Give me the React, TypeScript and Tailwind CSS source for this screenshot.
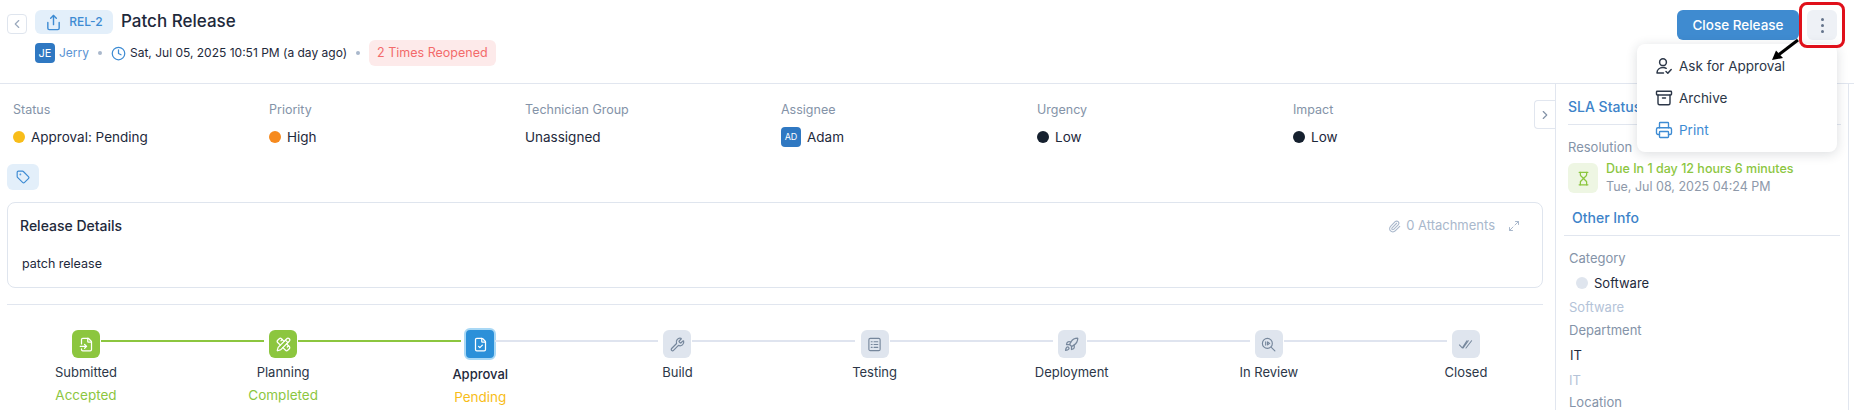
import {
  Archive,
  ChevronLeft,
  ChevronRight,
  Clock,
  FileCheck,
  FileInput,
  Hourglass,
  Maximize2,
  Paperclip,
  PencilRuler,
  Printer,
  Rocket,
  Share,
  Tag,
  Wrench,
} from "lucide-react";

const fields = [
  { label: "Status", value: "Approval: Pending", dot: "bg-[#f8bd19]" },
  { label: "Priority", value: "High", dot: "bg-[#f68a1e]" },
  { label: "Technician Group", value: "Unassigned" },
  { label: "Assignee", value: "Adam", avatar: "AD" },
  { label: "Urgency", value: "Low", dot: "bg-[#15202e]" },
  { label: "Impact", value: "Low", dot: "bg-[#15202e]" },
];

function TestingIcon({ size = 15 }: { size?: number }) {
  return (
    <svg width={size} height={size} viewBox="0 0 16 16" fill="none" stroke="currentColor" strokeWidth="1.2" strokeLinecap="round">
      <rect x="2" y="1.5" width="12" height="13" rx="1.5" />
      <path d="M4.5 5h1M7.5 5h4M4.5 8h1M7.5 8h4M4.5 11h1M7.5 11h4" />
    </svg>
  );
}

function ReviewIcon({ size = 15 }: { size?: number }) {
  return (
    <svg width={size} height={size} viewBox="0 0 16 16" fill="none" stroke="currentColor" strokeWidth="1.2" strokeLinecap="round" strokeLinejoin="round">
      <circle cx="6.8" cy="6.8" r="5.3" />
      <path d="M11 11l3.8 3.8M5 5v3.6M7 5.2v3.2l2.2-1.6z" />
    </svg>
  );
}

function ClosedIcon({ size = 15 }: { size?: number }) {
  return (
    <svg width={size} height={size} viewBox="0 0 16 16" fill="none" stroke="currentColor" strokeWidth="1.1" strokeLinecap="round" strokeLinejoin="round">
      <path d="M1.5 8.5l3 3.2L9.5 4M5.5 11.7L11 4M8.5 11.7L14.5 4" />
    </svg>
  );
}

function ApprovalIcon() {
  return (
    <svg width="18" height="18" viewBox="0 0 18 18" fill="none" stroke="currentColor" strokeWidth="1.5" strokeLinecap="round" strokeLinejoin="round">
      <circle cx="8" cy="5.2" r="3.4" />
      <path d="M2 16c0-3.4 2.6-5.4 6-5.4 1.2 0 2.3.2 3.2.7M2 16h6.5M11 14.5l1.8 1.7 3.4-3.6" />
    </svg>
  );
}

const steps = [
  { name: "Submitted", sub: "Accepted", Icon: FileInput, state: "done" },
  { name: "Planning", sub: "Completed", Icon: PencilRuler, state: "done" },
  { name: "Approval", sub: "Pending", Icon: FileCheck, state: "active" },
  { name: "Build", Icon: Wrench, state: "todo" },
  { name: "Testing", Icon: TestingIcon, state: "todo" },
  { name: "Deployment", Icon: Rocket, state: "todo" },
  { name: "In Review", Icon: ReviewIcon, state: "todo" },
  { name: "Closed", Icon: ClosedIcon, state: "todo" },
];

function Stepper() {
  return (
    <div className="flex justify-between pl-[19px] pr-[17px] pt-[25px]">
      {steps.map((s, i) => (
        <div key={s.name} className="relative flex w-[120px] flex-col items-center">
          {i < steps.length - 1 && (
            <span
              className={`absolute left-[75px] top-[10px] h-[2px] w-[163px] ${
                i < 2 ? "bg-[#8cc63f]" : "bg-[#dfe4ef]"
              }`}
            />
          )}
          {s.state === "done" && (
            <div className="flex h-[28px] w-[28px] items-center justify-center rounded-md bg-[#8cc63f] text-white">
              <s.Icon size={15} />
            </div>
          )}
          {s.state === "active" && (
            <div className="-mt-[2px] flex h-[32px] w-[32px] items-center justify-center rounded-md border-2 border-[#a9d8f5] bg-[#2b90d9] text-white">
              <s.Icon size={15} />
            </div>
          )}
          {s.state === "todo" && (
            <div className="flex h-[28px] w-[28px] items-center justify-center rounded-md bg-[#dfe5ee] text-[#76879c]">
              <s.Icon size={15} />
            </div>
          )}
          <div
            className={`mt-[5px] text-[13px] leading-[18px] ${
              s.state === "active" ? "font-medium text-[#1e293b]" : "text-[#2c3748]"
            }`}
          >
            {s.name}
          </div>
          {s.sub && (
            <div
              className={`mt-[5px] text-[13.5px] leading-[18px] ${
                s.state === "active" ? "text-[#f8bd19]" : "text-[#8cc63f]"
              }`}
            >
              {s.sub}
            </div>
          )}
        </div>
      ))}
    </div>
  );
}

function Sidebar() {
  return (
    <aside className="w-[294px] shrink-0 border-x border-[#e1e6ef] text-[13px]">
      <div className="ml-[12px] mr-[7px] border-b border-[#e1e6ef] pb-[8px] pt-[14px] text-[14px] font-medium leading-[18px] text-[#3d83c9]">
        SLA Status
      </div>
      <div className="ml-[12px] mt-[13px] leading-[18px] text-[#8493a8]">Resolution</div>
      <div className="ml-[12px] mt-[7px] flex gap-[8px]">
        <div className="flex h-[30px] w-[30px] items-center justify-center rounded-md bg-[#eef6e3] text-[#8cc63f]">
          <Hourglass size={15} />
        </div>
        <div className="-mt-[3px]">
          <div className="text-[12.5px] font-medium leading-[18px] text-[#8cc63f]">
            Due In 1 day 12 hours 6 minutes
          </div>
          <div className="text-[12.5px] leading-[18px] text-[#8e99aa]">Tue, Jul 08, 2025 04:24 PM</div>
        </div>
      </div>
      <div className="mx-[8px] mt-[13px] border-b border-[#e1e6ef] pb-[8px] pl-[8px] text-[14px] font-medium leading-[18px] text-[#3d83c9]">
        Other Info
      </div>
      <div className="ml-[13px] mt-[13px] leading-[18px] text-[#8493a8]">Category</div>
      <div className="ml-[20px] mt-[7px] flex items-center gap-[6px] leading-[18px] text-[#1e293b]">
        <span className="h-[12px] w-[12px] rounded-full bg-[#dfe5ee]" />
        Software
      </div>
      <div className="ml-[13px] mt-[6px] leading-[18px] text-[#b4c3d8]">Software</div>
      <div className="ml-[13px] mt-[5px] leading-[18px] text-[#8493a8]">Department</div>
      <div className="ml-[14px] mt-[7px] leading-[18px] text-[#1e293b]">IT</div>
      <div className="ml-[13px] mt-[7px] leading-[18px] text-[#b4c3d8]">IT</div>
      <div className="ml-[13px] mt-[4px] leading-[18px] text-[#8493a8]">Location</div>
    </aside>
  );
}

function ActionMenu() {
  return (
    <div className="absolute right-[17px] top-[44px] z-10 flex h-[108px] w-[200px] flex-col justify-between rounded-lg bg-white py-[12px] pl-[18px] text-[13.5px] shadow-[0_2px_12px_rgba(30,41,59,0.16)]">
      <div className="flex h-[20px] items-center gap-[6px] text-[#2c3748]">
        <ApprovalIcon />
        Ask for Approval
      </div>
      <div className="flex h-[20px] items-center gap-[6px] text-[#2c3748]">
        <Archive size={18} strokeWidth={1.9} />
        Archive
      </div>
      <div className="flex h-[20px] items-center gap-[6px] text-[#3d8bd3]">
        <Printer size={18} strokeWidth={1.8} />
        Print
      </div>
    </div>
  );
}

export default function App() {
  return (
    <div className="relative flex h-[410px] w-full flex-col overflow-hidden bg-white font-[Inter,sans-serif] text-[#1e293b]">
      <header className="flex h-[84px] shrink-0 justify-between border-b border-[#e1e6ef] pl-[7px] pr-[17px] pt-[10px]">
        <div>
          <div className="flex items-center gap-[8px]">
            <button className="mt-[4px] flex h-[20px] w-[20px] items-center justify-center rounded border border-[#dfe5ee] text-[#9aa9bd]">
              <ChevronLeft size={14} />
            </button>
            <div className="flex h-[24px] w-[78px] items-center justify-center gap-[7px] rounded-md bg-[#e3effa] text-[12px] font-medium text-[#3d8bd3]">
              <Share size={17} />
              REL-2
            </div>
            <h1 className="-mt-[2px] text-[17px] font-medium leading-[24px] text-[#1e293b]">Patch Release</h1>
          </div>
          <div className="ml-[28px] mt-[6px] flex items-center">
            <span className="flex h-[20px] w-[20px] items-center justify-center rounded bg-[#2f78c2] text-[11px] text-white">
              JE
            </span>
            <span className="ml-[4px] text-[12px] text-[#5b93d3]">Jerry</span>
            <span className="mx-[9px] h-[4px] w-[4px] rounded-full bg-[#a9b8cc]" />
            <Clock size={15} className="text-[#3d8bd3]" />
            <span className="ml-[4px] text-[12px]">Sat, Jul 05, 2025 10:51 PM (a day ago)</span>
            <span className="mx-[9px] h-[4px] w-[4px] rounded-full bg-[#a9b8cc]" />
            <span className="flex h-[26px] items-center rounded-md bg-[#fdeaea] px-[8px] text-[12.5px] text-[#f36b6b]">
              2 Times Reopened
            </span>
          </div>
        </div>
        <div className="flex gap-[8px]">
          <button className="h-[30px] w-[122px] rounded-md bg-[#3f8bd0] text-[13.5px] font-medium text-white">
            Close Release
          </button>
          <button className="flex h-[30px] w-[30px] flex-col items-center justify-center gap-[3px] rounded-md bg-[#eef1f6]">
            <span className="h-[3px] w-[3px] rounded-full bg-[#64748b]" />
            <span className="h-[3px] w-[3px] rounded-full bg-[#64748b]" />
            <span className="h-[3px] w-[3px] rounded-full bg-[#64748b]" />
          </button>
        </div>
      </header>

      <div className="flex min-h-0 w-[1850px] flex-1">
        <main className="relative w-[1555px] shrink-0 pl-[7px] pr-[12px]">
          <button className="absolute right-0 top-[16px] flex h-[29px] w-[21px] items-center justify-center rounded-l border border-r-0 border-[#e1e6ef] bg-white text-[#8493a8]">
            <ChevronRight size={14} />
          </button>

          <div className="grid grid-cols-[repeat(6,256px)] pl-[6px] pt-[18px] leading-[16px]">
            {fields.map((f) => (
              <div key={f.label}>
                <div className="text-[12.5px] text-[#8493a8]">{f.label}</div>
                <div className="mt-[9px] flex h-[20px] items-center gap-[6px] text-[13.5px] text-[#1e293b]">
                  {f.dot && <span className={`h-[12px] w-[12px] rounded-full ${f.dot}`} />}
                  {f.avatar && (
                    <span className="flex h-[20px] w-[20px] items-center justify-center rounded bg-[#2f78c2] text-[9px] text-white">
                      {f.avatar}
                    </span>
                  )}
                  {f.value}
                </div>
              </div>
            ))}
          </div>

          <div className="mt-[17px] flex h-[26px] w-[32px] items-center justify-center rounded-md bg-[#e3effa] text-[#3d8bd3]">
            <Tag size={14} />
          </div>

          <section className="mt-[12px] h-[86px] rounded-lg border border-[#dfe5ee] pl-[12px] pr-[22px] pt-[13px]">
            <div className="flex items-center justify-between">
              <h2 className="text-[14px] font-medium leading-[20px]">Release Details</h2>
              <div className="flex items-center text-[13px] text-[#a9b8cc]">
                <Paperclip size={13} />
                <span className="ml-[5px]">0 Attachments</span>
                <Maximize2 size={12} className="ml-[13px]" />
              </div>
            </div>
            <p className="ml-[2px] mt-[19px] text-[12.5px] leading-[18px]">patch release</p>
          </section>

          <div className="mt-[16px] border-t border-[#e1e6ef]">
            <Stepper />
          </div>
        </main>
        <Sidebar />
      </div>

      <ActionMenu />

      <div className="absolute left-[1799px] top-[2px] z-20 h-[46px] w-[46px] rounded-lg border-[3px] border-[#e0101a]" />
      <svg className="absolute left-[1765px] top-[36px] z-20" width="40" height="28" viewBox="0 0 40 28">
        <path d="M33 4 L14 18.5" stroke="#000" strokeWidth="3" fill="none" />
        <path d="M7 24 L11 14.5 L18 22 Z" fill="#000" />
      </svg>
    </div>
  );
}
